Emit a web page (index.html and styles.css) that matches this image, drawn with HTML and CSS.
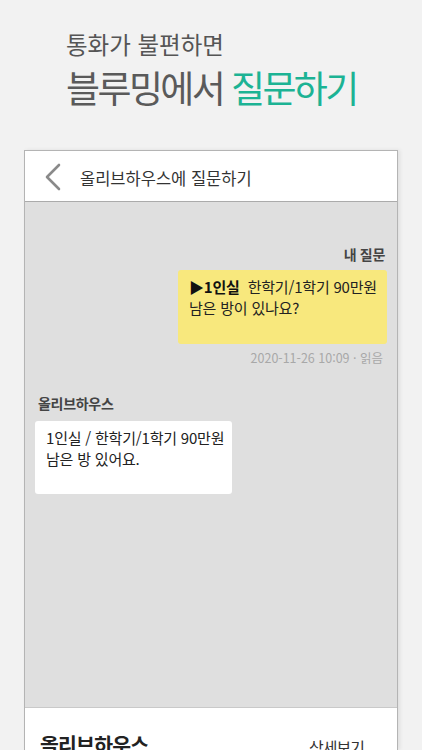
FILE: index.html
```html
<!DOCTYPE html>
<html lang="ko">
<head>
<meta charset="utf-8">
<link rel="stylesheet" href="styles.css">
</head>
<body>
<div class="page">
  <header class="hero">
    <p class="hero-sub">통화가 불편하면</p>
    <h1 class="hero-title">블루밍에서 <span class="accent">질문하기</span></h1>
  </header>
  <section class="phone">
    <div class="topbar">
      <svg class="back" width="18" height="28" viewBox="0 0 18 28"><path d="M15 2 L3 14 L15 26" fill="none" stroke="#8a8a8a" stroke-width="2.6" stroke-linecap="round" stroke-linejoin="round"/></svg>
      <span class="topbar-title">올리브하우스에 질문하기</span>
    </div>
    <div class="chat">
      <div class="mine">
        <div class="label label-right">내 질문</div>
        <div class="bubble bubble-yellow"><b class="room">▶1인실</b>&nbsp; 한학기/1학기 90만원<br>남은 방이 있나요?</div>
        <div class="meta">2020-11-26 10:09 · 읽음</div>
      </div>
      <div class="theirs">
        <div class="label">올리브하우스</div>
        <div class="bubble bubble-white">1인실 / 한학기/1학기 90만원<br>남은 방 있어요.</div>
      </div>
    </div>
    <div class="footer">
      <span class="footer-name">올리브하우스</span>
      <span class="footer-link">상세보기</span>
    </div>
  </section>
</div>
</body>
</html>
```

FILE: styles.css
```css
* { box-sizing: border-box; }
html, body { margin: 0; padding: 0; }
body {
  background: #f2f2f2;
  font-family: "Noto Sans CJK KR", "Noto Sans", sans-serif;
  width: 422px;
  height: 750px;
  overflow: hidden;
}
.page { display: flex; flex-direction: column; }
.hero { padding: 28px 0 0 66px; height: 150px; }
.hero-sub {
  margin: 0;
  font-size: 23.5px;
  line-height: 32px;
  font-weight: 400;
  color: #555;
  letter-spacing: 0;
}
.hero-title {
  margin: 2px 0 0 0;
  font-size: 37px;
  line-height: 50px;
  font-weight: 400;
  color: #5a5a5a;
  letter-spacing: -2.6px;
}
.accent { color: #1cb394; }
.phone {
  margin-left: 24px;
  width: 374px;
  height: 600px;
  border: 1px solid #b4b4b4;
  border-bottom: none;
  box-shadow: 2px 0 4px rgba(0,0,0,0.08);
  display: flex;
  flex-direction: column;
  background: #fff;
}
.topbar {
  height: 51px;
  flex: none;
  background: #fff;
  border-bottom: 1px solid #ababab;
  display: flex;
  align-items: center;
  padding-left: 19px;
}
.back { margin-right: 18px; margin-top: 2px; }
.topbar-title {
  font-size: 16.5px;
  color: #333;
  letter-spacing: 0;
  margin-top: 3px;
}
.chat {
  height: 506px;
  flex: none;
  background: #dfdfdf;
  border-bottom: 1px solid #c9c9c9;
  display: flex;
  flex-direction: column;
  padding: 42px 10px 0 10px;
}
.mine { display: flex; flex-direction: column; align-items: flex-end; }
.label {
  font-size: 14px;
  font-weight: 700;
  color: #444;
  line-height: 20px;
  letter-spacing: -0.3px;
}
.label-right { margin-right: 2px; }
.bubble {
  font-size: 15px;
  line-height: 21px;
  color: #222;
  border-radius: 3px;
  letter-spacing: -0.2px;
  white-space: nowrap;
}
.bubble-yellow {
  margin-top: 6px;
  width: 209px;
  height: 74px;
  background: #f8e87d;
  padding: 6px 4px 0 11px;
}
.room { font-weight: 700; color: #111; }
.meta {
  margin-top: 5px;
  margin-right: 4px;
  font-size: 12.5px;
  line-height: 18px;
  color: #a8a8a8;
}
.theirs { margin-top: 26px; display: flex; flex-direction: column; align-items: flex-start; }
.theirs .label { margin-left: 3px; }
.bubble-white {
  margin-top: 8px;
  width: 197px;
  height: 73px;
  background: #fff;
  padding: 6px 4px 0 11px;
}
.footer {
  flex: 1;
  background: #fff;
  display: flex;
  align-items: flex-start;
  justify-content: space-between;
  padding: 22px 33px 0 15px;
}
.footer-name {
  font-size: 20.5px;
  line-height: 28px;
  font-weight: 700;
  color: #222;
  letter-spacing: -0.8px;
}
.footer-link {
  font-size: 16px;
  line-height: 24px;
  color: #333;
  margin-top: 5px;
  letter-spacing: -1px;
}
```
